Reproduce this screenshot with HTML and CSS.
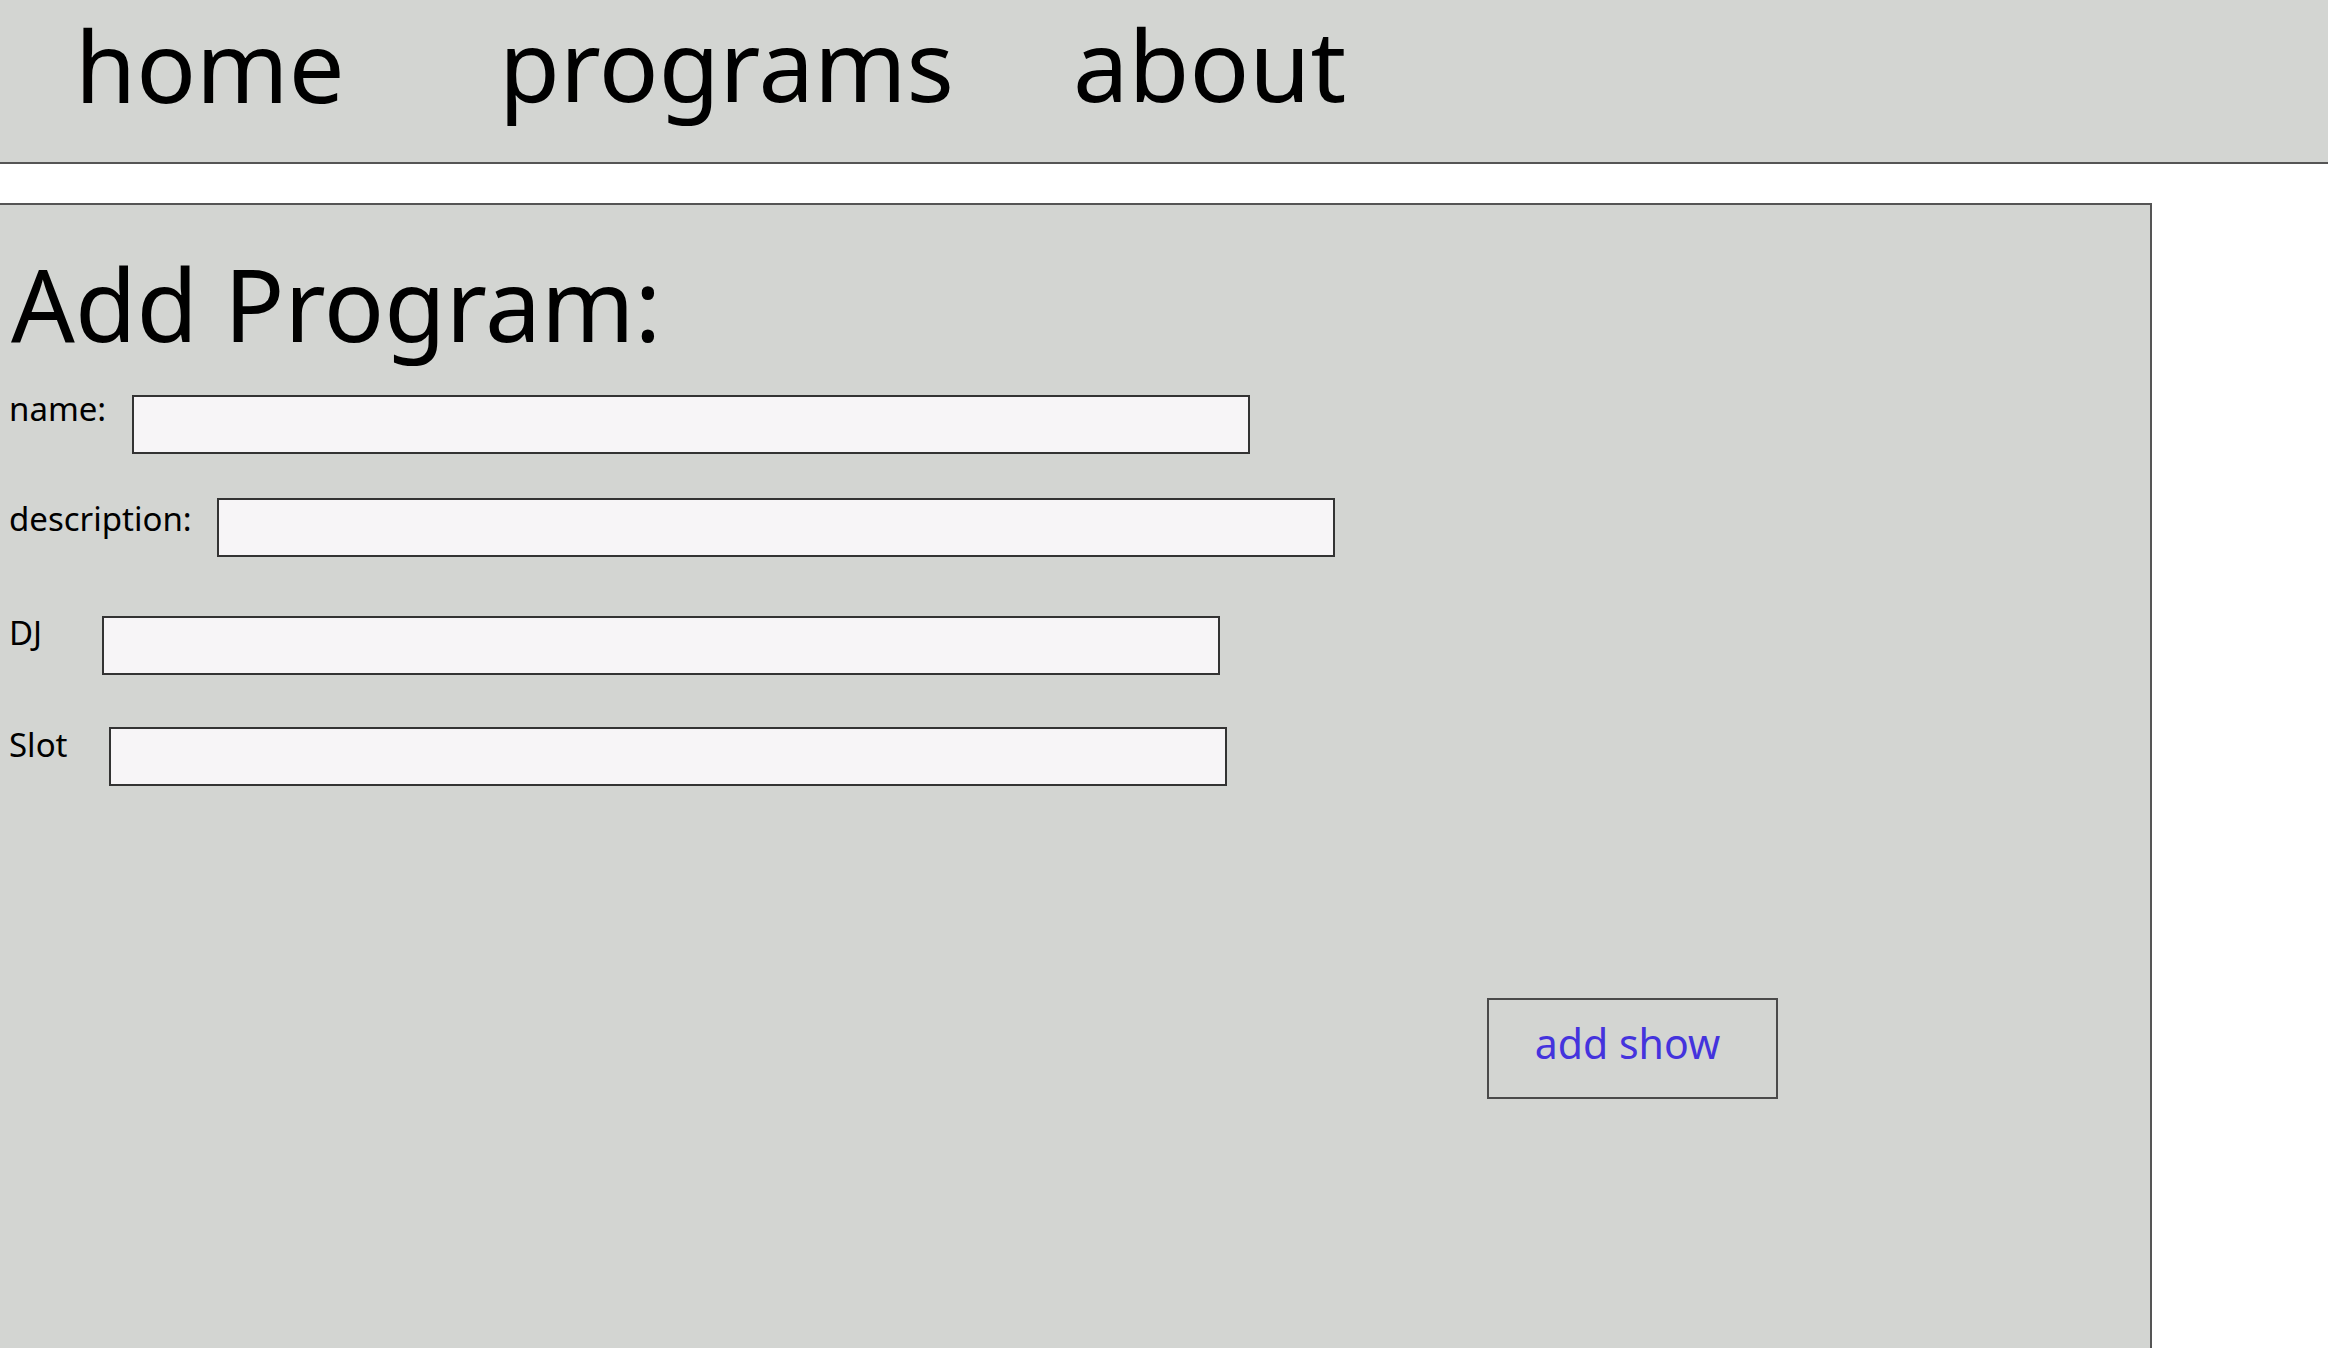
FILE: index.html
```html
<!DOCTYPE html>
<html lang="en">
<head>
<meta charset="utf-8">
<title>Add Program</title>
<link rel="stylesheet" href="styles.css">
</head>
<body>
<nav class="topnav">
  <a class="nav-link nav-home" href="#">home</a>
  <a class="nav-link nav-programs" href="#">programs</a>
  <a class="nav-link nav-about" href="#">about</a>
</nav>
<main class="panel">
  <h1 class="panel-title">Add Program:</h1>
  <form class="program-form">
    <div class="field field-name">
      <label class="field-label" for="name">name:</label>
      <input class="field-input" id="name" type="text">
    </div>
    <div class="field field-desc">
      <label class="field-label" for="description">description:</label>
      <input class="field-input" id="description" type="text">
    </div>
    <div class="field field-dj">
      <label class="field-label" for="dj">DJ</label>
      <input class="field-input" id="dj" type="text">
    </div>
    <div class="field field-slot">
      <label class="field-label" for="slot">Slot</label>
      <input class="field-input" id="slot" type="text">
    </div>
    <div class="actions">
      <button class="add-btn" type="button">add show</button>
    </div>
  </form>
</main>
</body>
</html>
```
FILE: styles.css
```css
html, body {
  margin: 0;
  padding: 0;
  background: #ffffff;
}

body {
  font-family: "Noto Sans", "Open Sans", sans-serif;
  color: #000;
  overflow: hidden;
}

/* ---------- top navigation ---------- */
.topnav {
  display: flex;
  align-items: flex-start;
  box-sizing: border-box;
  height: 164px;
  padding-left: 75px;
  background: #d3d5d2;
  border-bottom: 2px solid #555;
}

.nav-link {
  display: block;
  font-size: 99px;
  line-height: 1;
  color: #000;
  text-decoration: none;
}

.nav-home {
  width: 424px;
  padding-top: 15px;
}

.nav-programs {
  width: 574px;
  padding-top: 14px;
}

.nav-about {
  padding-top: 14px;
}

/* ---------- main panel ---------- */
.panel {
  display: block;
  box-sizing: border-box;
  width: 2152px;
  height: 1200px;
  margin-top: 39px;
  padding-left: 9px;
  background: #d3d5d2;
  border-top: 2px solid #555;
  border-right: 2px solid #555;
}

.panel-title {
  margin: 48px 0 0 2px;
  font-size: 100px;
  font-weight: 400;
  line-height: 1;
}

.program-form {
  display: flex;
  flex-direction: column;
}

.field {
  display: flex;
  align-items: flex-start;
}

.field-label {
  box-sizing: border-box;
  font-size: 33px;
  line-height: 1;
  color: #000;
}

.field-input {
  box-sizing: border-box;
  width: 1118px;
  height: 59px;
  margin: 0;
  padding: 0 8px;
  background: #f7f5f7;
  border: 2px solid #333;
  border-radius: 0;
  font: inherit;
  font-size: 28px;
}

.field-name { margin-top: 42px; }
.field-name .field-label { width: 123px; margin-top: -3px; }

.field-desc { margin-top: 44px; }
.field-desc .field-label { width: 208px; margin-top: 4px; }

.field-dj { margin-top: 59px; }
.field-dj .field-label { width: 93px; }

.field-slot { margin-top: 52px; }
.field-slot .field-label { width: 100px; margin-top: 1px; }

/* ---------- action ---------- */
.actions {
  display: flex;
  margin-top: 212px;
  padding-left: 1478px;
}

.add-btn {
  box-sizing: border-box;
  width: 291px;
  height: 101px;
  margin: 0;
  padding: 0 10px 11px 0;
  align-self: flex-start;
  display: block;
  text-align: center;
  background: transparent;
  border: 2px solid #4a4a4a;
  border-radius: 0;
  font-family: "Noto Sans", "Open Sans", sans-serif;
  font-size: 41px;
  line-height: 1;
  color: #4433dd;
  cursor: pointer;
}
```
